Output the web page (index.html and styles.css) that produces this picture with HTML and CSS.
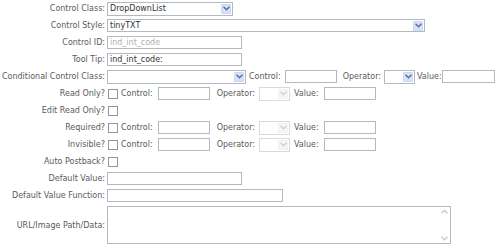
FILE: index.html
```html
<html lang="en">
<head>
<meta http-equiv="Content-Type" content="text/html; charset=utf-8"/>
<link rel="stylesheet" href="styles.css">
</head>
<body>
<form name="ctlf" action="#">
<div class="props">

    <label class="lbl">Control Class:</label>
    <div class="fld">
        <span class="ddl w-class"><span class="ddltxt">DropDownList</span><span class="arr"><svg width="7" height="5" viewBox="0 0 7 5"><path d="M0.5 0.8 L3.5 3.8 L6.5 0.8" fill="none" stroke="#5a6f9a" stroke-width="1.5"/></svg></span></span>
    </div>

    <label class="lbl">Control Style:</label>
    <div class="fld">
        <span class="ddl w-style"><span class="ddltxt">tinyTXT</span><span class="arr"><svg width="7" height="5" viewBox="0 0 7 5"><path d="M0.5 0.8 L3.5 3.8 L6.5 0.8" fill="none" stroke="#5a6f9a" stroke-width="1.5"/></svg></span></span>
    </div>

    <label class="lbl">Control ID:</label>
    <div class="fld"><input class="txt w-mid dis" type="text" value="ind_int_code" disabled></div>

    <label class="lbl">Tool Tip:</label>
    <div class="fld"><input class="txt w-mid" type="text" value="ind_int_code:"></div>

    <label class="lbl">Conditional Control Class:</label>
    <div class="fld">
        <span class="ddl w-cond"><span class="ddltxt"></span><span class="arr"><svg width="7" height="5" viewBox="0 0 7 5"><path d="M0.5 0.8 L3.5 3.8 L6.5 0.8" fill="none" stroke="#5a6f9a" stroke-width="1.5"/></svg></span></span>
        <span class="cap c-ctl">Control:</span>
        <input class="txt w-sm" type="text">
        <span class="cap c-op">Operator:</span>
        <span class="ddl w-op"><span class="ddltxt"></span><span class="arr"><svg width="7" height="5" viewBox="0 0 7 5"><path d="M0.5 0.8 L3.5 3.8 L6.5 0.8" fill="none" stroke="#5a6f9a" stroke-width="1.5"/></svg></span></span>
        <span class="cap c-valtight">Value:</span>
        <input class="txt w-val" type="text">
    </div>

    <label class="lbl">Read Only?</label>
    <div class="fld">
        <span class="chk"></span>
        <span class="cap">Control:</span>
        <input class="txt w-sm" type="text">
        <span class="cap c-op2">Operator:</span>
        <span class="ddl w-op dis"><span class="ddltxt"></span><span class="arr"><svg width="7" height="5" viewBox="0 0 7 5"><path d="M0.5 0.8 L3.5 3.8 L6.5 0.8" fill="none" stroke="#cdd1d6" stroke-width="1.4"/></svg></span></span>
        <span class="cap c-val">Value:</span>
        <input class="txt w-sm" type="text">
    </div>

    <label class="lbl">Edit Read Only?</label>
    <div class="fld"><span class="chk"></span></div>

    <label class="lbl">Required?</label>
    <div class="fld">
        <span class="chk"></span>
        <span class="cap">Control:</span>
        <input class="txt w-sm" type="text">
        <span class="cap c-op2">Operator:</span>
        <span class="ddl w-op dis"><span class="ddltxt"></span><span class="arr"><svg width="7" height="5" viewBox="0 0 7 5"><path d="M0.5 0.8 L3.5 3.8 L6.5 0.8" fill="none" stroke="#cdd1d6" stroke-width="1.4"/></svg></span></span>
        <span class="cap c-val">Value:</span>
        <input class="txt w-sm" type="text">
    </div>

    <label class="lbl">Invisible?</label>
    <div class="fld">
        <span class="chk"></span>
        <span class="cap">Control:</span>
        <input class="txt w-sm" type="text">
        <span class="cap c-op2">Operator:</span>
        <span class="ddl w-op dis"><span class="ddltxt"></span><span class="arr"><svg width="7" height="5" viewBox="0 0 7 5"><path d="M0.5 0.8 L3.5 3.8 L6.5 0.8" fill="none" stroke="#cdd1d6" stroke-width="1.4"/></svg></span></span>
        <span class="cap c-val">Value:</span>
        <input class="txt w-sm" type="text">
    </div>

    <label class="lbl">Auto Postback?</label>
    <div class="fld"><span class="chk"></span></div>

    <label class="lbl">Default Value:</label>
    <div class="fld"><input class="txt w-dv" type="text"></div>

    <label class="lbl">Default Value Function:</label>
    <div class="fld"><input class="txt w-fn" type="text"></div>

    <label class="lbl lbl-tall">URL/Image Path/Data:</label>
    <div class="fld fld-tall">
        <div class="area">
            <textarea class="areatxt"></textarea>
            <span class="sb">
                <svg width="7" height="5" viewBox="0 0 7 5"><path d="M0.5 4.2 L3.5 1.2 L6.5 4.2" fill="none" stroke="#c6cbd1" stroke-width="1.3"/></svg>
                <svg width="7" height="5" viewBox="0 0 7 5"><path d="M0.5 0.8 L3.5 3.8 L6.5 0.8" fill="none" stroke="#c6cbd1" stroke-width="1.3"/></svg>
            </span>
        </div>
    </div>

</div>
</form>
</body>
</html>
```

FILE: styles.css
```css
body {
    margin: 0;
    background-color: #ffffff;
    font-family: "DejaVu Sans", Verdana, sans-serif;
    font-size: 8px;
    color: #5a5a5a;
}
form {
    margin: 0;
}
.props {
    display: grid;
    grid-template-columns: 107px 1fr;
    grid-auto-rows: 17px;
}
.lbl {
    display: flex;
    align-items: center;
    justify-content: flex-end;
    padding-right: 2px;
    white-space: nowrap;
}
.fld {
    display: flex;
    align-items: center;
    white-space: nowrap;
}
.lbl-tall, .fld-tall {
    height: 42px;
}
.fld-tall {
    align-items: flex-start;
    padding-top: 2px;
}
.cap {
    margin-left: 3px;
    margin-right: 5px;
}
.c-ctl {
    margin-left: 3px;
    margin-right: 4px;
}
.c-op {
    margin-left: 6px;
    margin-right: 3px;
}
.c-op2 {
    margin-left: 7px;
    margin-right: 4px;
}
.c-val {
    margin-left: 4px;
    margin-right: 5px;
}
.c-valtight {
    margin-left: 2px;
    margin-right: 0;
}
.txt {
    box-sizing: border-box;
    height: 13px;
    border: 1px solid #b4b9bf;
    padding: 0 2px;
    margin: 0;
    font-family: "DejaVu Sans", Verdana, sans-serif;
    font-size: 8px;
    color: #333333;
    background: #ffffff;
    outline: none;
}
.dis {
    color: #b0b0b0;
}
.w-mid { width: 135px; }
.w-sm { width: 52px; }
.w-val { width: 53px; }
.w-dv { width: 135px; }
.w-fn { width: 176px; }
.ddl {
    box-sizing: border-box;
    display: inline-flex;
    align-items: center;
    height: 14px;
    border: 1px solid #b4b9bf;
    background: #ffffff;
    color: #333333;
}
.ddltxt {
    flex: 1;
    padding-left: 2px;
}
.arr {
    width: 10px;
    height: 10px;
    margin-right: 1px;
    display: flex;
    align-items: center;
    justify-content: center;
    background: #d7e2fa;
    border: 1px solid #cad8f6;
    box-sizing: border-box;
    border-radius: 1px;
}
.ddl.dis .arr {
    background: #f5f6f7;
    border-color: #eef0f2;
}
.ddl.dis {
    border-color: #d8dbde;
}
.w-class { width: 126px; }
.w-style { width: 318px; height: 13px; }
.w-cond { width: 139px; }
.w-op { width: 31px; }
.chk {
    box-sizing: border-box;
    display: inline-block;
    width: 10px;
    height: 10px;
    margin-left: 1px;
    border: 1px solid #8d96a1;
    background: #ffffff;
}
.area {
    box-sizing: border-box;
    position: relative;
    width: 344px;
    height: 38px;
    border: 1px solid #b4b9bf;
}
.areatxt {
    border: none;
    width: 330px;
    height: 34px;
    resize: none;
    outline: none;
    margin: 0;
    padding: 1px;
}
.sb {
    position: absolute;
    right: 1px;
    top: 2px;
    bottom: 2px;
    width: 10px;
    display: flex;
    flex-direction: column;
    justify-content: space-between;
    align-items: center;
}
```
